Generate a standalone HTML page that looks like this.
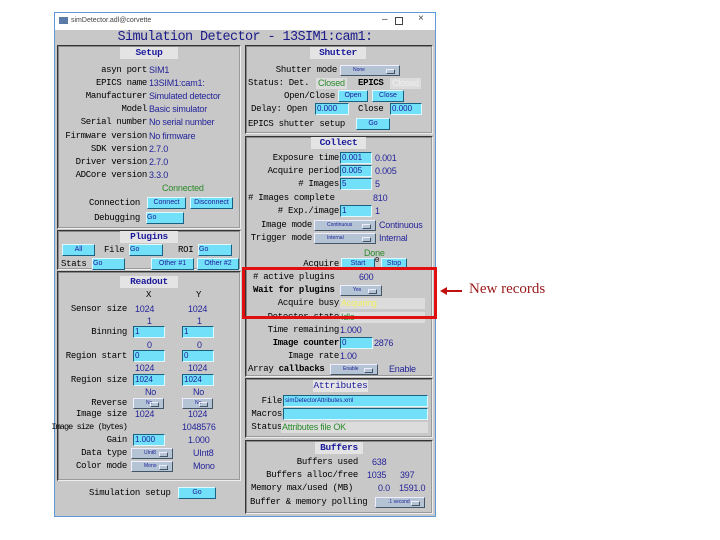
<!DOCTYPE html>
<html><head><meta charset="utf-8"><style>
*{margin:0;padding:0;box-sizing:border-box}
body{width:720px;height:540px;background:#fff;position:relative;overflow:hidden;font-family:"Liberation Mono",monospace;font-size:9px;letter-spacing:-0.3px}
div,span{position:absolute;white-space:nowrap}
.t{line-height:12px;color:#000}
.v{line-height:12px;color:#24249a;font-family:"Liberation Sans",sans-serif;letter-spacing:-0.2px;font-size:9px}
.g{color:#2a8a2a}
.p{border:2px groove #e8e8e8;border-color:#888 #eee #eee #888}
.h{background:#e4e4e4;color:#1a1a9a;text-align:center;line-height:12px;font-weight:bold;font-size:9.5px}
.b{background:#72e0f8;border:1px solid;border-color:#e0f8ff #1a6080 #1a6080 #e0f8ff;color:#1a1a9a;text-align:center;line-height:10px;height:12px;font-family:"Liberation Sans",sans-serif;font-size:7px;letter-spacing:0}
.i{background:#72e0f8;border:1px solid;border-color:#1a6080 #e0f8ff #e0f8ff #1a6080;color:#1a1a9a;line-height:10px;height:12px;font-family:"Liberation Sans",sans-serif;font-size:8px;padding-left:1px;letter-spacing:0}
.m{background:#b4c4d4;border:1px solid;border-color:#eef #456 #456 #eef;color:#1a1a9a;line-height:9px;height:11px;font-family:"Liberation Sans",sans-serif;font-size:5px;padding-left:12px;letter-spacing:0}
.m::after{content:"";position:absolute;right:4px;top:3px;width:7px;height:3px;border:1px solid;border-color:#eef #456 #456 #eef}
.gb{background:#dcdcdc;height:11px}
</style></head><body>
<div style="left:54px;top:12px;width:382px;height:505px;border:1px solid #5a9ad8;background:#c8c8c8"></div>
<div style="left:55px;top:13px;width:380px;height:17px;background:#fff"></div>
<div style="left:59px;top:17px;width:9px;height:7px;background:#5a7aa8"></div>
<div style="left:71px;top:15px;font-family:'Liberation Sans';font-size:7px;line-height:12px;color:#444;letter-spacing:0">simDetector.adl@corvette</div>
<div style="left:382px;top:14px;font-family:'Liberation Sans';font-size:10px;color:#444;letter-spacing:0">–</div>
<div style="left:395px;top:17px;width:8px;height:8px;border:1px solid #444"></div>
<div style="left:418px;top:13px;font-family:'Liberation Sans';font-size:10px;color:#444;letter-spacing:0">×</div>
<div style="left:55px;top:30px;width:380px;height:15px;text-align:center;color:#1a1a8a;font-size:13.5px;line-height:16px;letter-spacing:-0.6px">Simulation Detector - 13SIM1:cam1:</div>

<div class="p" style="left:57px;top:45px;width:184px;height:184px"></div>
<div class="h" style="left:120px;top:47px;width:58px">Setup</div>
<div class="t" style="right:573px;top:64px">asyn port</div><div class="v" style="left:149px;top:64px">SIM1</div>
<div class="t" style="right:573px;top:77px">EPICS name</div><div class="v" style="left:149px;top:77px">13SIM1:cam1:</div>
<div class="t" style="right:573px;top:90px">Manufacturer</div><div class="v" style="left:149px;top:90px">Simulated detector</div>
<div class="t" style="right:573px;top:103px">Model</div><div class="v" style="left:149px;top:103px">Basic simulator</div>
<div class="t" style="right:573px;top:116px">Serial number</div><div class="v" style="left:149px;top:116px">No serial number</div>
<div class="t" style="right:573px;top:130px">Firmware version</div><div class="v" style="left:149px;top:130px">No firmware</div>
<div class="t" style="right:573px;top:143px">SDK version</div><div class="v" style="left:149px;top:143px">2.7.0</div>
<div class="t" style="right:573px;top:156px">Driver version</div><div class="v" style="left:149px;top:156px">2.7.0</div>
<div class="t" style="right:573px;top:169px">ADCore version</div><div class="v" style="left:149px;top:169px">3.3.0</div>
<div class="v g" style="left:162px;top:182px">Connected</div>
<div class="t" style="right:580px;top:197px">Connection</div>
<div class="b" style="left:147px;top:197px;width:39px">Connect</div><div class="b" style="left:190px;top:197px;width:43px">Disconnect</div>
<div class="t" style="right:580px;top:212px">Debugging</div><div class="b" style="left:146px;top:212px;width:38px;text-align:left">Go</div>

<div class="p" style="left:57px;top:230px;width:184px;height:40px"></div>
<div class="h" style="left:120px;top:231px;width:58px">Plugins</div>
<div class="b" style="left:62px;top:244px;width:33px">All</div>
<div class="t" style="left:104px;top:244px">File</div><div class="b" style="left:129px;top:244px;width:34px;text-align:left">Go</div>
<div class="t" style="left:178px;top:244px">ROI</div><div class="b" style="left:198px;top:244px;width:34px;text-align:left">Go</div>
<div class="t" style="left:61px;top:258px">Stats</div><div class="b" style="left:92px;top:258px;width:33px;text-align:left">Go</div>
<div class="b" style="left:151px;top:258px;width:43px">Other #1</div><div class="b" style="left:197px;top:258px;width:42px">Other #2</div>

<div class="p" style="left:57px;top:271px;width:184px;height:210px"></div>
<div class="h" style="left:120px;top:276px;width:58px">Readout</div>
<div class="t" style="left:146px;top:289px">X</div><div class="t" style="left:196px;top:289px">Y</div>
<div class="t" style="right:593px;top:303px">Sensor size</div><div class="v" style="left:135px;top:303px">1024</div><div class="v" style="left:188px;top:303px">1024</div>
<div class="v" style="left:147px;top:315px">1</div><div class="v" style="left:197px;top:315px">1</div>
<div class="t" style="right:593px;top:326px">Binning</div><div class="i" style="left:133px;top:326px;width:32px">1</div><div class="i" style="left:182px;top:326px;width:32px">1</div>
<div class="v" style="left:147px;top:339px">0</div><div class="v" style="left:197px;top:339px">0</div>
<div class="t" style="right:593px;top:350px">Region start</div><div class="i" style="left:133px;top:350px;width:32px">0</div><div class="i" style="left:182px;top:350px;width:32px">0</div>
<div class="v" style="left:135px;top:362px">1024</div><div class="v" style="left:188px;top:362px">1024</div>
<div class="t" style="right:593px;top:374px">Region size</div><div class="i" style="left:133px;top:374px;width:32px">1024</div><div class="i" style="left:182px;top:374px;width:32px">1024</div>
<div class="v" style="left:145px;top:386px">No</div><div class="v" style="left:193px;top:386px">No</div>
<div class="t" style="right:593px;top:397px">Reverse</div><div class="m" style="left:133px;top:398px;width:31px">No</div><div class="m" style="left:182px;top:398px;width:31px">No</div>
<div class="t" style="right:593px;top:408px">Image size</div><div class="v" style="left:135px;top:408px">1024</div><div class="v" style="left:188px;top:408px">1024</div>
<div class="t" style="right:593px;top:421px;font-size:8.5px;letter-spacing:-0.9px">Image size (bytes)</div><div class="v" style="left:182px;top:421px">1048576</div>
<div class="t" style="right:593px;top:434px">Gain</div><div class="i" style="left:133px;top:434px;width:32px">1.000</div><div class="v" style="left:188px;top:434px">1.000</div>
<div class="t" style="right:593px;top:447px">Data type</div><div class="m" style="left:131px;top:448px;width:42px">UInt8</div><div class="v" style="left:193px;top:447px">UInt8</div>
<div class="t" style="right:593px;top:460px">Color mode</div><div class="m" style="left:131px;top:461px;width:42px">Mono</div><div class="v" style="left:193px;top:460px">Mono</div>
<div class="t" style="left:89px;top:487px">Simulation setup</div><div class="b" style="left:178px;top:487px;width:38px">Go</div>

<div class="p" style="left:245px;top:45px;width:188px;height:89px"></div>
<div class="h" style="left:310px;top:47px;width:56px">Shutter</div>
<div class="t" style="right:383px;top:64px">Shutter mode</div><div class="m" style="left:340px;top:65px;width:60px">None</div>
<div class="t" style="left:248px;top:77px">Status: Det.</div><div class="gb" style="left:316px;top:78px;width:31px"></div><div class="v g" style="left:318px;top:77px">Closed</div>
<div class="t" style="left:358px;top:77px;font-weight:bold">EPICS</div><div class="gb" style="left:390px;top:78px;width:31px"></div><div class="v" style="left:392px;top:77px;color:#f0f0f0">Closed</div>
<div class="t" style="right:385px;top:90px">Open/Close</div><div class="b" style="left:338px;top:90px;width:30px">Open</div><div class="b" style="left:372px;top:90px;width:32px">Close</div>
<div class="t" style="left:251px;top:103px">Delay: Open</div><div class="i" style="left:315px;top:103px;width:34px">0.000</div>
<div class="t" style="left:358px;top:103px">Close</div><div class="i" style="left:390px;top:103px;width:32px">0.000</div>
<div class="t" style="left:248px;top:118px">EPICS shutter setup</div><div class="b" style="left:356px;top:118px;width:34px">Go</div>

<div class="p" style="left:245px;top:136px;width:188px;height:241px"></div>
<div class="h" style="left:311px;top:137px;width:55px">Collect</div>
<div class="t" style="right:381px;top:152px">Exposure time</div><div class="i" style="left:340px;top:152px;width:32px">0.001</div><div class="v" style="left:375px;top:152px">0.001</div>
<div class="t" style="right:381px;top:165px">Acquire period</div><div class="i" style="left:340px;top:165px;width:32px">0.005</div><div class="v" style="left:375px;top:165px">0.005</div>
<div class="t" style="right:381px;top:178px"># Images</div><div class="i" style="left:340px;top:178px;width:32px">5</div><div class="v" style="left:375px;top:178px">5</div>
<div class="t" style="left:248px;top:192px"># Images complete</div><div class="v" style="left:373px;top:192px">810</div>
<div class="t" style="right:381px;top:205px"># Exp./image</div><div class="i" style="left:340px;top:205px;width:32px">1</div><div class="v" style="left:375px;top:205px">1</div>
<div class="t" style="right:408px;top:219px">Image mode</div><div class="m" style="left:314px;top:220px;width:62px">Continuous</div><div class="v" style="left:379px;top:219px">Continuous</div>
<div class="t" style="right:408px;top:232px">Trigger mode</div><div class="m" style="left:314px;top:233px;width:62px">Internal</div><div class="v" style="left:379px;top:232px">Internal</div>
<div class="v g" style="left:364px;top:247px">Done</div>
<div class="t" style="right:381px;top:258px">Acquire</div><div class="b" style="left:341px;top:258px;width:34px">Start</div><div class="t" style="left:375px;top:255px;font-size:7px">0</div><div class="b" style="left:381px;top:258px;width:26px">Stop</div>
<div class="t" style="left:253px;top:271px"># active plugins</div><div class="v" style="left:359px;top:271px">600</div>
<div class="t" style="left:253px;top:284px;font-weight:bold">Wait for plugins</div><div class="m" style="left:340px;top:285px;width:42px">Yes</div>
<div class="t" style="right:381px;top:297px">Acquire busy</div><div class="gb" style="left:340px;top:298px;width:85px"></div><div class="v" style="left:341px;top:297px;color:#f4f060">Acquiring</div>
<div class="t" style="right:381px;top:311px">Detector state</div><div class="gb" style="left:340px;top:312px;width:85px"></div><div class="v g" style="left:341px;top:311px">Idle</div>
<div class="t" style="right:381px;top:324px">Time remaining</div><div class="v" style="left:340px;top:324px">1.000</div>
<div class="t" style="right:381px;top:337px;font-weight:bold">Image counter</div><div class="i" style="left:340px;top:337px;width:33px">0</div><div class="v" style="left:374px;top:337px">2876</div>
<div class="t" style="right:381px;top:350px">Image rate</div><div class="v" style="left:340px;top:350px">1.00</div>
<div class="t" style="left:248px;top:363px">Array <b>callbacks</b></div><div class="m" style="left:330px;top:364px;width:48px">Enable</div><div class="v" style="left:389px;top:363px">Enable</div>

<div class="p" style="left:245px;top:378px;width:188px;height:60px"></div>
<div class="h" style="left:313px;top:380px;width:55px;font-weight:normal">Attributes</div>
<div class="t" style="right:438px;top:395px">File</div><div class="i" style="left:283px;top:395px;width:145px;font-size:6px">simDetectorAttributes.xml</div>
<div class="t" style="right:438px;top:408px">Macros</div><div class="i" style="left:283px;top:408px;width:145px"></div>
<div class="t" style="right:438px;top:421px">Status</div><div class="gb" style="left:281px;top:422px;width:147px"></div><div class="v g" style="left:282px;top:421px">Attributes file OK</div>

<div class="p" style="left:245px;top:440px;width:188px;height:74px"></div>
<div class="h" style="left:315px;top:442px;width:48px">Buffers</div>
<div class="t" style="right:362px;top:456px">Buffers used</div><div class="v" style="left:372px;top:456px">638</div>
<div class="t" style="right:362px;top:469px">Buffers alloc/free</div><div class="v" style="left:367px;top:469px">1035</div><div class="v" style="left:400px;top:469px">397</div>
<div class="t" style="left:251px;top:482px">Memory max/used (MB)</div><div class="v" style="left:378px;top:482px">0.0</div><div class="v" style="left:399px;top:482px">1591.0</div>
<div class="t" style="left:250px;top:496px">Buffer &amp; memory polling</div><div class="m" style="left:375px;top:497px;width:50px">.1 second</div>

<div style="left:242px;top:267px;width:195px;height:52px;border:3px solid #e01010"></div>
<div style="left:446px;top:290px;width:16px;height:2px;background:#c01010"></div>
<div style="left:440px;top:287px;width:0;height:0;border-top:4px solid transparent;border-bottom:4px solid transparent;border-right:7px solid #c01010"></div>
<div style="left:469px;top:281px;font-family:'Liberation Serif',serif;font-size:15px;color:#9a1a1a;letter-spacing:0">New records</div>
</body></html>
